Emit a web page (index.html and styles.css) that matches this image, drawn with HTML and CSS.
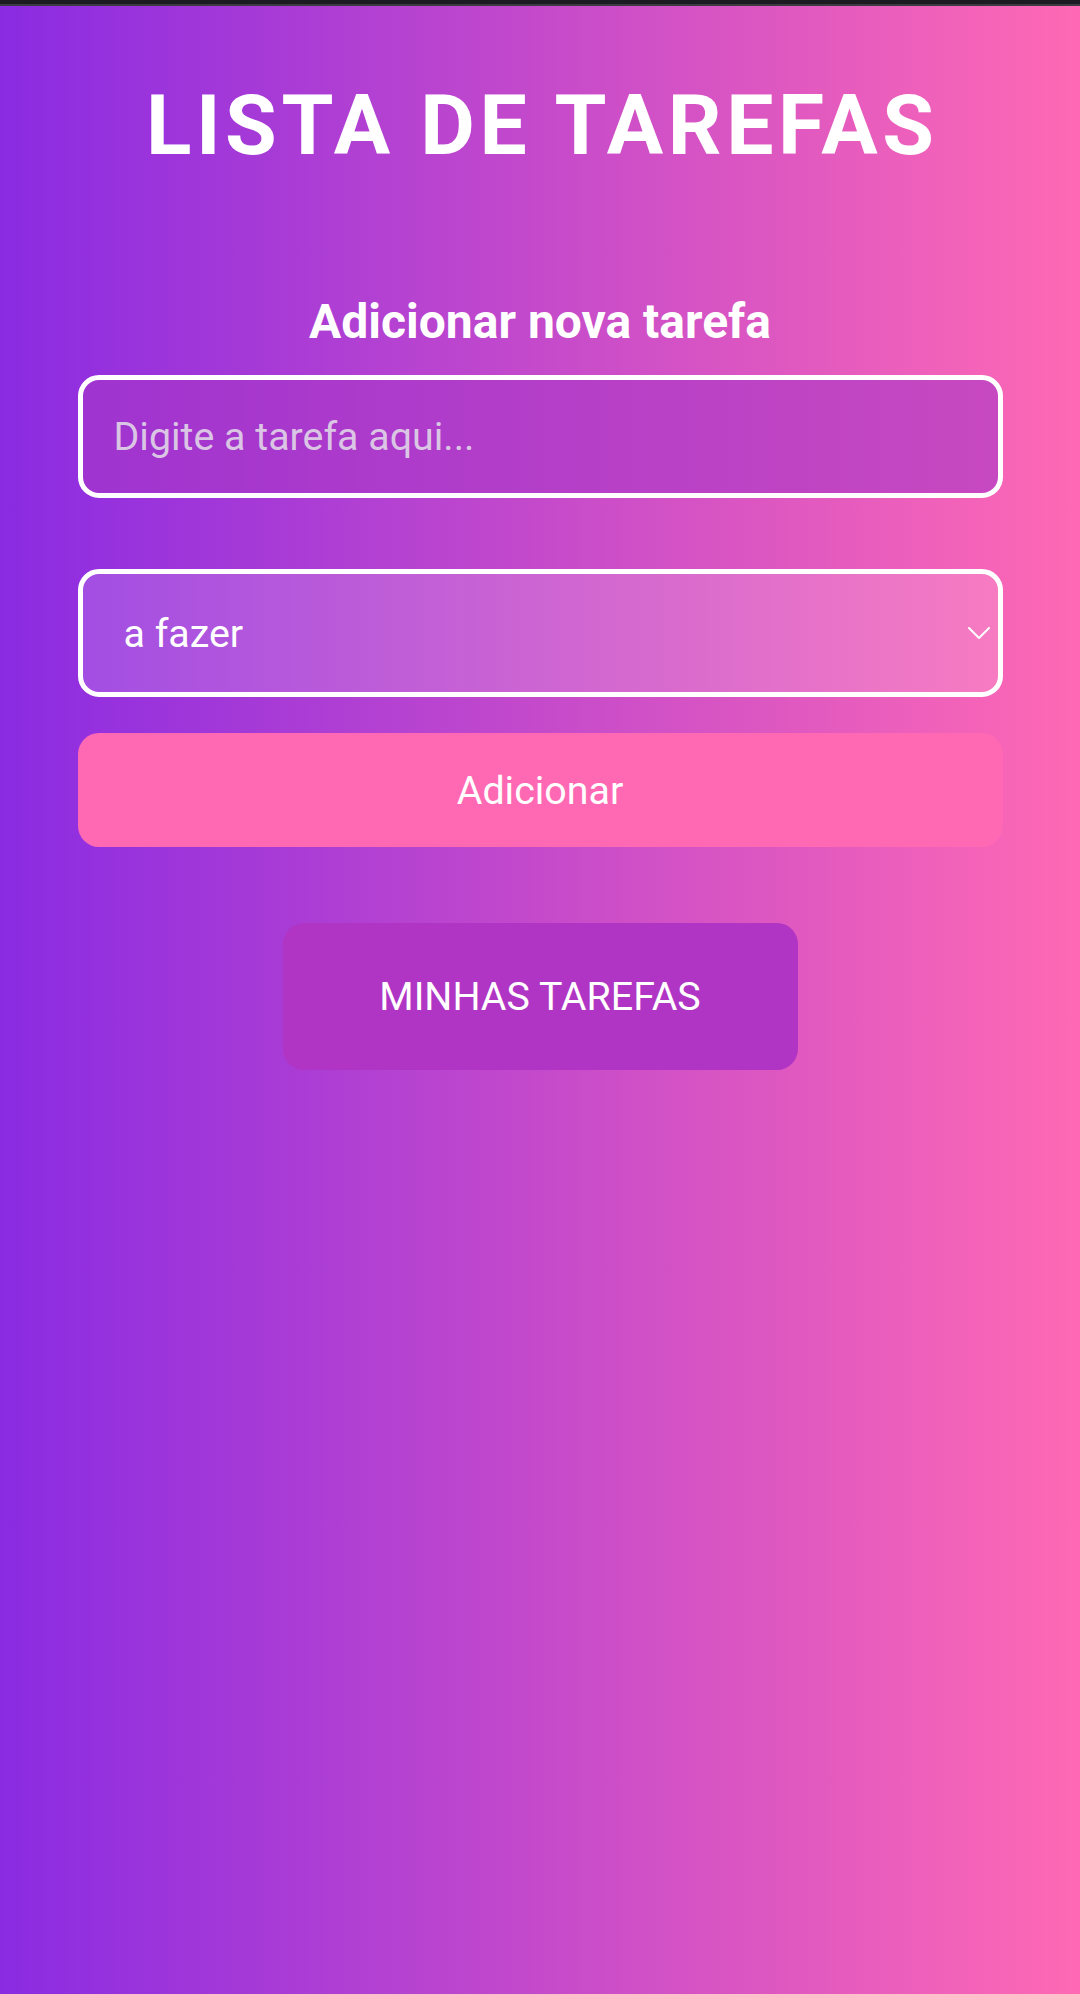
FILE: index.html
```html
<!DOCTYPE html>
<html lang="pt-BR">
<head>
<meta charset="utf-8">
<title>Lista de Tarefas</title>
<link rel="stylesheet" href="styles.css">
</head>
<body>
<div class="statusbar"></div>
<main class="app">
  <h1 class="title">LISTA DE TAREFAS</h1>
  <section class="form">
    <h2 class="form-title">Adicionar nova tarefa</h2>
    <input class="task-input" type="text" placeholder="Digite a tarefa aqui...">
    <div class="select-wrap">
      <select class="status-select">
        <option>a fazer</option>
        <option>fazendo</option>
        <option>feito</option>
      </select>
      <svg class="chevron" width="22" height="12" viewBox="0 0 22 12" aria-hidden="true">
        <polyline points="1,1 11,11 21,1" fill="none" stroke="#ffffff" stroke-width="2" stroke-linecap="round" stroke-linejoin="round"/>
      </svg>
    </div>
    <button class="add-btn" type="button">Adicionar</button>
  </section>
  <button class="list-btn" type="button">MINHAS TAREFAS</button>
</main>
</body>
</html>
```

FILE: styles.css
```css
html, body {
  margin: 0;
  padding: 0;
}

body {
  min-height: 1994px;
  background: linear-gradient(to right, #8a2be2, #ff69b4);
  font-family: Roboto, "Noto Sans", "Liberation Sans", sans-serif;
  color: #ffffff;
}

.statusbar {
  height: 4px;
  background: #1c1b21;
  border-bottom: 2px solid #3c3b42;
}

.app {
  display: flex;
  flex-direction: column;
  align-items: center;
}

.title {
  margin: 71px 0 0;
  padding-left: 4.5px;
  font-size: 84px;
  line-height: 98px;
  font-weight: 700;
  letter-spacing: 4.6px;
  text-align: center;
}

.form {
  width: 925px;
  display: flex;
  flex-direction: column;
  margin-top: 119px;
}

.form-title {
  margin: 0 0 26px;
  font-size: 48px;
  line-height: 55px;
  font-weight: 700;
  text-align: center;
}

.task-input {
  box-sizing: border-box;
  height: 123px;
  margin: 0;
  padding: 0 31px;
  border: 5px solid #ffffff;
  border-radius: 21px;
  background: rgba(168, 55, 198, 0.6);
  color: #ffffff;
  font-family: inherit;
  font-size: 39.375px;
  outline: none;
}

.task-input::placeholder {
  color: #dac6e4;
  opacity: 1;
}

.select-wrap {
  position: relative;
  margin-top: 71px;
}

.status-select {
  box-sizing: border-box;
  display: block;
  width: 100%;
  height: 128px;
  margin: 0;
  padding: 0 60px 0 41px;
  border: 5px solid #ffffff;
  border-radius: 21px;
  background: rgba(255, 255, 255, 0.15);
  color: #ffffff;
  font-family: inherit;
  font-size: 39.375px;
  -webkit-appearance: none;
  appearance: none;
  outline: none;
}

.status-select option {
  color: #333333;
}

.chevron {
  position: absolute;
  right: 13px;
  top: 58px;
  pointer-events: none;
}

.add-btn {
  height: 114px;
  margin-top: 36px;
  border: none;
  border-radius: 21px;
  background: #ff69b4;
  color: #ffffff;
  font-family: inherit;
  font-size: 39.375px;
  cursor: pointer;
}

.list-btn {
  width: 515px;
  height: 147px;
  margin-top: 76px;
  border: none;
  border-radius: 21px;
  background: #b135c4;
  color: #ffffff;
  font-family: inherit;
  font-size: 39.375px;
  cursor: pointer;
}
```
